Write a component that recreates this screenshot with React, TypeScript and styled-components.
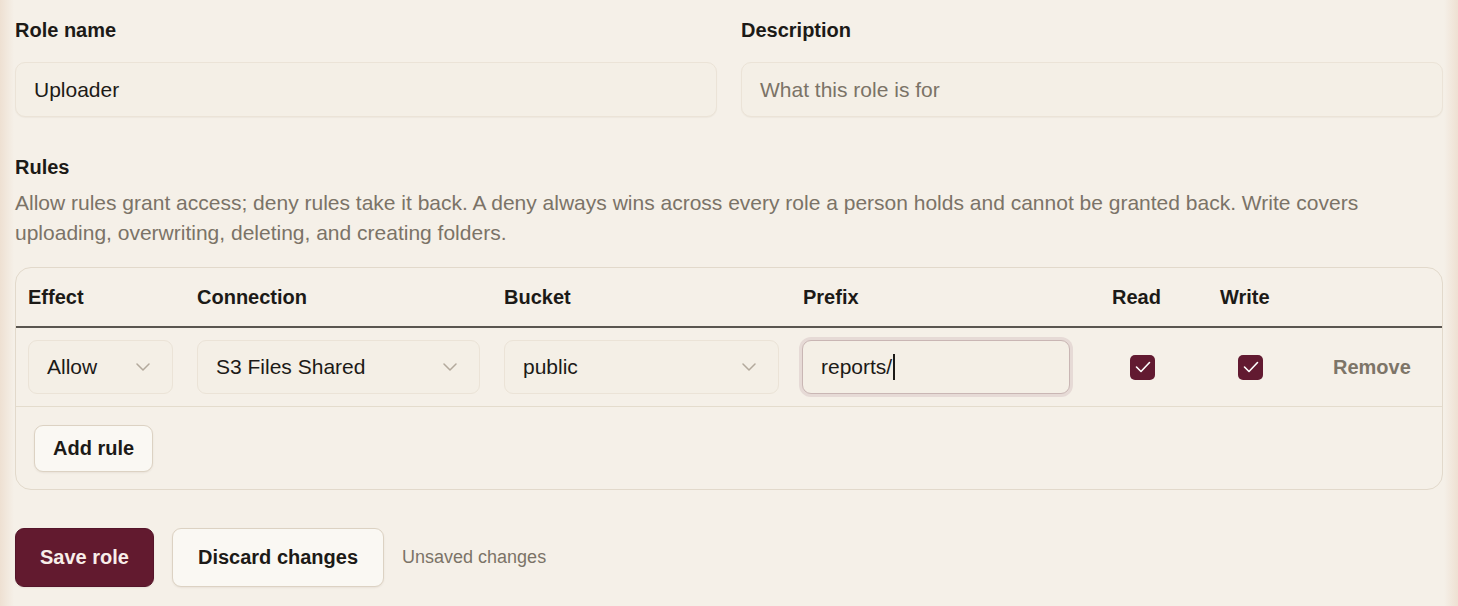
import styled, { createGlobalStyle } from 'styled-components';

const GlobalStyle = createGlobalStyle`
    html, body {
        margin: 0;
        padding: 0;
    }
    body {
        min-height: 100vh;
        background: linear-gradient(to right, #eee0d2 0, #f5f0e8 14px, #f5f0e8 calc(100% - 14px), #eee0d2 100%);
        font-family: "Liberation Sans", Arial, sans-serif;
        color: #1c1a17;
    }
`;

const Page = styled.div`
    padding: 15px 15px 0 15px;
`;

const FieldGrid = styled.div`
    display: grid;
    grid-template-columns: 1fr 1fr;
    gap: 24px;
`;

const Field = styled.div`
    display: flex;
    flex-direction: column;
    gap: 17px;
`;

const Label = styled.div`
    font-size: 20px;
    line-height: 30px;
    font-weight: 700;
`;

const TextBox = styled.div<{ $placeholder?: boolean }>`
    height: 55px;
    box-sizing: border-box;
    display: flex;
    align-items: center;
    padding: 0 18px;
    font-size: 21px;
    color: ${p => (p.$placeholder ? '#7b7367' : '#1c1a17')};
    background: #f4efe6;
    border: 1px solid #ebe3d7;
    border-radius: 10px;
    box-shadow: 0 1px 1px rgba(120, 100, 70, 0.06);
`;

const RulesSection = styled.div`
    margin-top: 35px;
`;

const Help = styled.p`
    margin: 6px 0 19px 0;
    font-size: 21px;
    line-height: 30px;
    color: #7b7367;
`;

const Card = styled.div`
    border: 1px solid #e2d9cb;
    border-radius: 16px;
`;

const RuleGrid = styled.div`
    display: grid;
    grid-template-columns: 169px 307px 299px 309px 108px 113px 1fr;
    align-items: center;
`;

const HeaderRow = styled(RuleGrid)`
    height: 60px;
    border-bottom: 2px solid #5a5650;
    box-sizing: border-box;
`;

const HeadCell = styled.div`
    padding: 0 12px;
    font-size: 20px;
    font-weight: 700;
`;

const BodyRow = styled(RuleGrid)`
    height: 79px;
    border-bottom: 1px solid #e4dccd;
    box-sizing: border-box;
`;

const Cell = styled.div`
    padding: 0 12px;
`;

const Select = styled.div`
    height: 54px;
    box-sizing: border-box;
    display: flex;
    align-items: center;
    justify-content: space-between;
    padding: 0 22px 0 18px;
    font-size: 21px;
    background: #f4efe6;
    border: 1px solid #ebe3d7;
    border-radius: 9px;
    svg {
        flex: none;
    }
`;

const FocusedBox = styled.div`
    height: 54px;
    box-sizing: border-box;
    display: flex;
    align-items: center;
    padding: 0 18px;
    font-size: 21px;
    background: #f4efe6;
    border: 1px solid #c9b6b4;
    border-radius: 9px;
    box-shadow: 0 0 0 3px #e6dad6;
    margin: 0 18px 0 -1px;
`;

const Caret = styled.span`
    display: inline-block;
    width: 2px;
    height: 26px;
    margin-left: 1px;
    background: #1c1a17;
`;

const Check = styled.div`
    width: 25px;
    height: 25px;
    margin-left: 18px;
    border-radius: 5px;
    background: #621a31;
    display: flex;
    align-items: center;
    justify-content: center;
`;

const RemoveLink = styled.span`
    font-size: 20px;
    font-weight: 700;
    color: #7d7568;
`;

const CardFooter = styled.div`
    padding: 18px 18px 17px 18px;
`;

const Button = styled.button<{ $primary?: boolean; $big?: boolean }>`
    font-family: inherit;
    font-size: 20px;
    font-weight: 700;
    height: ${p => (p.$big ? '59px' : '47px')};
    padding: 0 ${p => (p.$primary ? '24px' : p.$big ? '25px' : '18px')};
    border-radius: 9px;
    cursor: pointer;
    color: ${p => (p.$primary ? '#f8eeea' : '#1c1a17')};
    background: ${p => (p.$primary ? '#621a2f' : '#faf8f3')};
    border: 1px solid ${p => (p.$primary ? '#55152a' : '#dcd2c3')};
    box-shadow: 0 1px 2px rgba(90, 70, 40, 0.08);
`;

const Actions = styled.div`
    display: flex;
    align-items: center;
    gap: 18px;
    margin-top: 38px;
`;

const Status = styled.span`
    font-size: 18px;
    color: #7b7367;
`;

function Chevron() {
    return (
        <svg width="14" height="8" viewBox="0 0 14 8" fill="none">
            <path d="M1 1l6 6 6-6" stroke="#b3a99c" strokeWidth="1.5" strokeLinecap="round" strokeLinejoin="round" />
        </svg>
    );
}

function CheckMark() {
    return (
        <svg width="16" height="12" viewBox="0 0 16 12" fill="none">
            <path d="M1.5 6l4.5 4.5 8.5-9" stroke="#ffffff" strokeWidth="1.6" strokeLinecap="round" strokeLinejoin="round" />
        </svg>
    );
}

export default function App() {
    return (
        <>
            <GlobalStyle />
            <Page>
                <FieldGrid>
                    <Field>
                        <Label>Role name</Label>
                        <TextBox>Uploader</TextBox>
                    </Field>
                    <Field>
                        <Label>Description</Label>
                        <TextBox $placeholder>What this role is for</TextBox>
                    </Field>
                </FieldGrid>

                <RulesSection>
                    <Label>Rules</Label>
                    <Help>
                        Allow rules grant access; deny rules take it back. A deny always wins across every role a
                        person holds and cannot be granted back. Write covers uploading, overwriting, deleting, and
                        creating folders.
                    </Help>
                    <Card>
                        <HeaderRow>
                            <HeadCell>Effect</HeadCell>
                            <HeadCell>Connection</HeadCell>
                            <HeadCell>Bucket</HeadCell>
                            <HeadCell>Prefix</HeadCell>
                            <HeadCell>Read</HeadCell>
                            <HeadCell>Write</HeadCell>
                            <HeadCell />
                        </HeaderRow>
                        <BodyRow>
                            <Cell>
                                <Select>Allow<Chevron /></Select>
                            </Cell>
                            <Cell>
                                <Select>S3 Files Shared<Chevron /></Select>
                            </Cell>
                            <Cell>
                                <Select>public<Chevron /></Select>
                            </Cell>
                            <Cell>
                                <FocusedBox>reports/<Caret /></FocusedBox>
                            </Cell>
                            <Cell>
                                <Check><CheckMark /></Check>
                            </Cell>
                            <Cell>
                                <Check><CheckMark /></Check>
                            </Cell>
                            <Cell>
                                <RemoveLink>Remove</RemoveLink>
                            </Cell>
                        </BodyRow>
                        <CardFooter>
                            <Button>Add rule</Button>
                        </CardFooter>
                    </Card>
                </RulesSection>

                <Actions>
                    <Button $primary $big>Save role</Button>
                    <Button $big>Discard changes</Button>
                    <Status>Unsaved changes</Status>
                </Actions>
            </Page>
        </>
    );
}
